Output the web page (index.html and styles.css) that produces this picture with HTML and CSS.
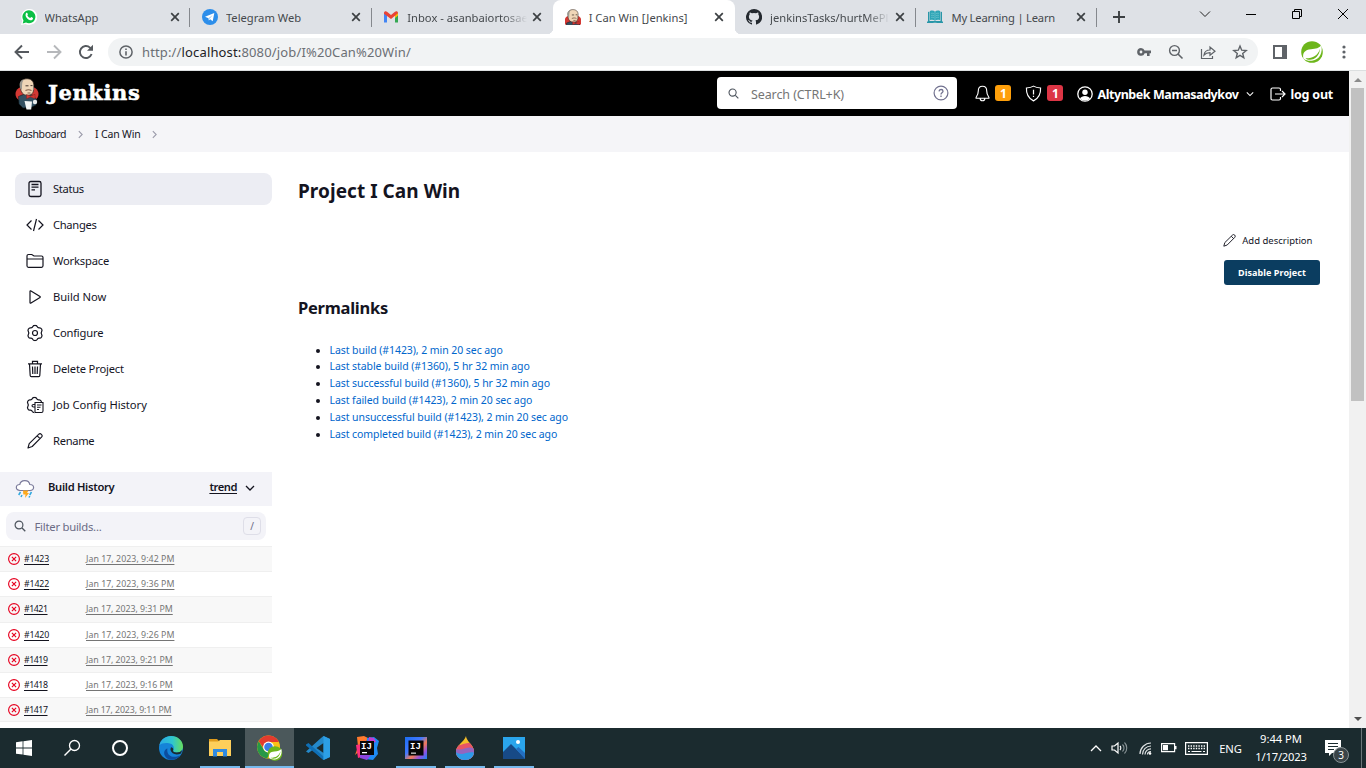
FILE: index.html
```html
<!DOCTYPE html>
<html lang="en">
<head>
<meta charset="utf-8">
<title>I Can Win [Jenkins]</title>
<link rel="stylesheet" href="styles.css">
</head>
<body>
<svg class="defs" aria-hidden="true">
  <symbol id="close" viewBox="0 0 10 10"><path d="M1.2 1.2l7.6 7.6M8.8 1.2L1.2 8.8" fill="none" stroke="#3c4043" stroke-width="1.7"/></symbol>
  <symbol id="chev-r" viewBox="0 0 6 10"><path d="M1 1l4 4-4 4" fill="none" stroke="#9a9aaa" stroke-width="1.3"/></symbol>
  <symbol id="chev-d" viewBox="0 0 10 6"><path d="M1 1l4 4 4-4" fill="none" stroke="currentColor" stroke-width="1.3"/></symbol>
  <symbol id="pencil" viewBox="0 0 16 16"><path d="M1 15l1.2-4.4L11.6 1.4a1.9 1.9 0 0 1 2.9 2.7L5.2 13.5zM10.2 2.8l2.9 2.9" fill="none" stroke="currentColor" stroke-width="1.15" stroke-linejoin="round"/></symbol>
  <symbol id="search" viewBox="0 0 12 12"><circle cx="5" cy="5" r="3.9" fill="none" stroke="#4d545d" stroke-width="1.2"/><path d="M8 8l3.3 3.3" stroke="#4d545d" stroke-width="1.3"/></symbol>
  <symbol id="fail" viewBox="0 0 12 12"><g fill="none" stroke="#e6001f" stroke-width="1.15"><circle cx="6" cy="6" r="5.4"/><path d="M3.9 3.9l4.2 4.2M8.1 3.9L3.9 8.1"/></g></symbol>
  <symbol id="spring" viewBox="0 0 22 22"><circle cx="11" cy="11" r="10.8" fill="#6db61b"/><path d="M20.300 4.500c1.600 6-1 14.500-9.300 15.200-3.500.3-6-.3-8.500-2 -1.500-6 1.500-9 7.500-9.500 5-.4 8-1.200 10.300-3.700z" fill="#fff"/><path d="M4.500 17.300c7 .2 12.500-2.500 14.500-9.500-.3 6.500-5 11-10 11-2 0-3.500-.5-4.500-1.500z" fill="#6db61b"/><path d="M3.500 16.500c1-3 4-4.500 8-5 3-.4 5-1.300 6.500-3-1.300 4-4 5.500-7.500 6-3 .4-5 .8-7 2z" fill="#fff"/></symbol>
  <symbol id="butler" viewBox="0 0 24 32">
    <ellipse cx="12" cy="16" rx="11.500" ry="8.500" fill="#d33833"/>
    <path d="M3.500 18.500l6-2.500 8 1 4.500 5-1 5-5 2.500-8 .5-4-4z" fill="#335061" stroke="#111c22" stroke-width=".6"/>
    <path d="M5.500 9C4 3 8.500.5 12.500.800c5 .3 7 4 6 9 .6 5-1.800 7.500-6 7.500C8 17.300 5.500 14 5.500 9z" fill="#f0d6b7" stroke="#302520" stroke-width=".7"/>
    <path d="M5.500 11C3.400 5 5.500 2 9 1.200 6.500 4.300 7.300 7.700 6.900 11.500z" fill="#99978f"/>
    <path d="M18.200 6l.6 5-1 2z" fill="#99978f"/>
    <path d="M10.500 7.800h3M15.500 7.600h2" stroke="#302520" stroke-width=".9"/><path d="M10.500 12.500c2-1 4-1 6 0M12.500 15h3" stroke="#81604b" stroke-width="1.100" fill="none"/>
    <path d="M11.500 16.500l4 1.500 4.500-1.700v4.500L15.500 19l-4 1.800z" fill="#d33833" stroke="#7a1917" stroke-width=".4"/>
    <path d="M9.500 23l7.500.5-.8 8h-4.700z" fill="#f3f5f5"/><circle cx="20" cy="24" r="2.200" fill="#e8ebec"/>
  </symbol>
  <symbol id="gear" viewBox="0 0 16 16"><path d="M6 1.800C6.600.4 9.400.4 10 1.800c.4 1 1.300 1.500 2.300 1.300 1.500-.2 2.900 2.100 2 3.400-.6.900-.6 2.100 0 3 .9 1.300-.5 3.600-2 3.400-1-.2-1.900.3-2.300 1.300-.6 1.400-3.400 1.400-4 0-.4-1-1.300-1.500-2.300-1.300-1.500.2-2.900-2.100-2-3.400.6-.9.600-2.100 0-3-.9-1.300.5-3.600 2-3.400 1 .2 1.900-.3 2.300-1.300z" fill="none" stroke="currentColor" stroke-width="1.150"/></symbol>
</svg>

<header class="tabstrip">
  <div class="tab"><svg class="fav" viewBox="0 0 16 16"><path d="M0 16l1.200-4.300A8 8 0 1 1 4.500 15z" fill="#fff"/><path d="M1.700 14.400l.8-3A6.500 6.500 0 1 1 5 13.600z" fill="#0bbf45"/><path d="M5.100 4c.7-.7 1.400-.1 1.700 1.200.2.600-.5.800-.4 1.200.6 1.300 1.400 2 2.700 2.500.5.100.8-1 1.300-.8l1.600.8c.300 2-2 2.700-3.500 2.100C5.500 9.700 3.600 6.400 5.100 4z" fill="#fff"/></svg><span class="tt">WhatsApp</span><svg class="x"><use href="#close"/></svg></div>
  <div class="tab"><svg class="fav" viewBox="0 0 16 16"><circle cx="8" cy="8" r="8" fill="#2d8eea"/><path d="M3 7.800l9.300-3.700-1.600 8.100-2.600-1.900-1.300 1.300-.3-2.300z" fill="#fff"/><path d="M6.500 9.200L10.700 6 7.600 9.700z" fill="#8fc3f4"/></svg><span class="tt">Telegram Web</span><svg class="x"><use href="#close"/></svg></div>
  <div class="tab nosep"><svg class="fav" viewBox="0 0 16 16"><path d="M1 3.500v10h3V6z" fill="#4285f4"/><path d="M15 3.500v10h-3V6z" fill="#34a853"/><path d="M12 6v3l3-2.500V4z" fill="#fbbc04"/><path d="M1 4c0-2 2-2.300 3-1.300L8 6l4-3.300C13 1.700 15 2 15 4l-3 2.700L8 10 1 4.700z" fill="#ea4335"/></svg><span class="tt fade">Inbox - asanbaiortosae</span><svg class="x"><use href="#close"/></svg></div>
  <div class="tab active"><svg class="fav" viewBox="2 0 20 21"><use href="#butler" width="24" height="32"/></svg><span class="tt">I Can Win [Jenkins]</span><svg class="x"><use href="#close"/></svg></div>
  <div class="tab"><svg class="fav" viewBox="0 0 16 16"><path d="M8 0a8 8 0 0 0-2.500 15.600c.4.100.5-.2.500-.4v-1.500c-2.200.5-2.700-.9-2.700-.9-.4-.9-.9-1.200-.9-1.200-.7-.5.100-.5.100-.5.800.1 1.200.8 1.200.8.700 1.200 1.900.9 2.300.700.1-.5.300-.9.500-1.100-1.800-.2-3.600-.9-3.600-3.900 0-.9.300-1.600.8-2.100-.1-.2-.4-1 .1-2.100 0 0 .7-.2 2.200.8a7.500 7.500 0 0 1 4 0c1.500-1 2.200-.8 2.200-.8.400 1.100.2 1.900.1 2.100.5.600.8 1.300.8 2.100 0 3.100-1.900 3.700-3.700 3.900.3.300.6.700.6 1.500v2.200c0 .2.100.5.600.4A8 8 0 0 0 8 0z" fill="#24292f"/></svg><span class="tt fade">jenkinsTasks/hurtMePl</span><svg class="x"><use href="#close"/></svg></div>
  <div class="tab"><svg class="fav" viewBox="0 0 16 16"><path d="M1 3l1.500-.4V12h11V2.600L15 3v10H1z" fill="#2996a8"/><path d="M3 2c2-.8 3.800-.5 5 .7 1.200-1.200 3-1.500 5-.7v9c-2-.6-3.700-.5-5 .8-1.300-1.300-3-1.400-5-.8z" fill="#2fa5b6"/><path d="M8 3v8M4 4.500c1-.4 2-.3 3 .3M4 6.500c1-.4 2-.3 3 .3M4 8.500c1-.4 2-.3 3 .3M12 4.500c-1-.4-2-.3-3 .3M12 6.500c-1-.4-2-.3-3 .3M12 8.500c-1-.4-2-.3-3 .3" stroke="#8fd3db" stroke-width=".5" fill="none"/><path d="M0 12.500h6l.6.700h2.800l.6-.7h6V14H0z" fill="#2996a8"/></svg><span class="tt learn">My Learning | Learn</span><svg class="x"><use href="#close"/></svg></div>
  <svg class="newtab" viewBox="0 0 12 12"><path d="M6 0v12M0 6h12" stroke="#3c4043" stroke-width="1.900"/></svg>
  <div class="winbtns">
    <svg width="12" height="12" viewBox="0 0 12 12"><path d="M1 3.500l5 5 5-5" fill="none" stroke="#222"/></svg>
    <svg width="12" height="12" viewBox="0 0 12 12"><path d="M1 6.500h10" stroke="#000"/></svg>
    <svg width="12" height="12" viewBox="0 0 12 12"><path d="M1.500 3.500h7v7h-7zM3.500 3V1.500h7v7H9" fill="none" stroke="#000"/></svg>
    <svg width="12" height="12" viewBox="0 0 12 12"><path d="M1 1l10 10M11 1L1 11" stroke="#000"/></svg>
  </div>
</header>

<div class="toolbar">
  <svg class="nav" viewBox="0 0 16 16"><path d="M15 8H2M8 1.500L1.500 8 8 14.500" fill="none" stroke="#55595e" stroke-width="1.900"/></svg>
  <svg class="nav" viewBox="0 0 16 16"><path d="M1 8h13M8 1.500L14.500 8 8 14.500" fill="none" stroke="#b6b8bb" stroke-width="1.900"/></svg>
  <svg class="nav" viewBox="0 0 16 16"><path d="M13.600 10A6 6 0 1 1 12 3.600L14 5.500" fill="none" stroke="#55595e" stroke-width="1.900"/><path d="M15 .8v6H9z" fill="#55595e"/></svg>
  <div class="omni">
    <svg class="info" viewBox="0 0 14 14"><circle cx="7" cy="7" r="6.100" fill="none" stroke="#5f6368" stroke-width="1.500"/><path d="M7 6.200v4.300M7 3.400V5" stroke="#5f6368" stroke-width="1.600"/></svg>
    <span class="url">http://<b>localhost:</b>8080/job/I%20Can%20Win/</span>
    <div class="omni-icons">
      <svg width="16" height="16" viewBox="0 0 16 16"><path d="M5 4a3.900 3.900 0 1 0 3.700 5.300H11V12h2.600V9.300H15V6.500H8.600A3.900 3.900 0 0 0 5 4zm0 2.600a1.400 1.400 0 1 1 0 2.800 1.400 1.400 0 0 1 0-2.800z" fill="#5f6368"/></svg>
      <svg width="16" height="16" viewBox="0 0 16 16"><circle cx="6.500" cy="6.500" r="4.900" fill="none" stroke="#5f6368" stroke-width="1.400"/><path d="M4 6.500h5M10 10l4.500 4.500" stroke="#5f6368" stroke-width="1.600"/></svg>
      <svg width="16" height="16" viewBox="0 0 16 16"><path d="M1.500 5v9.500h11V12M4 11c.5-3.500 2.500-5 6-5V3l5 4.300-5 4V8.600C7.300 8.600 5.500 9.300 4 11z" fill="none" stroke="#5f6368" stroke-width="1.200"/></svg>
      <svg width="16" height="16" viewBox="0 0 16 16"><path d="M8 2l1.700 4.200 4.500.3-3.500 2.900 1.100 4.400L8 11.400l-3.800 2.400 1.100-4.400-3.500-2.900 4.500-.3z" fill="none" stroke="#5f6368" stroke-width="1.400"/></svg>
    </div>
  </div>
  <svg class="panel" viewBox="0 0 14 14"><path d="M1 1h12v12H1z" fill="#fff" stroke="#5f6368" stroke-width="2"/><path d="M9 1h4v12H9z" fill="#5f6368"/></svg>
  <svg class="avatar"><use href="#spring"/></svg>
  <svg class="dots" viewBox="0 0 4 14"><g fill="#5f6368"><circle cx="2" cy="2" r="1.600"/><circle cx="2" cy="7" r="1.600"/><circle cx="2" cy="12" r="1.600"/></g></svg>
</div>

<div class="view">
  <div class="page">
    <header class="jhead">
      <svg class="logo"><use href="#butler"/></svg>
      <span class="brand">Jenkins</span>
      <div class="jsearch"><svg class="mag"><use href="#search"/></svg><span class="ph">Search (CTRL+K)</span><svg class="q" viewBox="0 0 16 16"><circle cx="8" cy="8" r="6.900" fill="none" stroke="#71718f" stroke-width="1.200"/><path d="M6 6.400c.2-2.600 4-2.400 4-.2C10 7.800 8 7.700 8 9.400M8 10.600v1.300" fill="none" stroke="#71718f" stroke-width="1.300"/></svg></div>
      <svg class="bell" viewBox="0 0 16 18"><path d="M8 1.200c3.200 0 4.500 2.300 4.500 5 0 3.800 1 5 2.300 6.800v1H1.200v-1C2.500 11.200 3.500 10 3.500 6.200c0-2.700 1.300-5 4.500-5zM5.500 14.500c.3 3 4.700 3 5 0" fill="none" stroke="#fff" stroke-width="1.200"/></svg>
      <span class="badge">1</span>
      <svg class="shield" viewBox="0 0 18 18"><path d="M9 1.200c2 1.200 4.500 1.800 7.500 2 .3 6.500-1.700 10.800-7.500 13.600C3.200 14 1.200 9.700 1.500 3.200c3-.2 5.500-.8 7.500-2z" fill="none" stroke="#fff" stroke-width="1.200"/><path d="M9 5v5M9 11.300v1.500" stroke="#fff" stroke-width="1.300"/></svg>
      <span class="badge red">1</span>
      <svg class="user" viewBox="0 0 16 16"><circle cx="8" cy="8" r="7.200" fill="none" stroke="#fff" stroke-width="1.300"/><circle cx="8" cy="6.200" r="2.700" fill="#fff"/><path d="M3 12.500c1.500-3.400 8.500-3.400 10 0C11 15 5 15 3 12.500z" fill="#fff"/></svg>
      <span class="jl name">Altynbek Mamasadykov</span>
      <svg class="dn"><use href="#chev-d"/></svg>
      <svg class="out" viewBox="0 0 16 14"><path d="M10.500 4V2.500c0-1-.5-1.500-1.500-1.500H2.500C1.500 1 1 1.500 1 2.500v9c0 1 .5 1.500 1.500 1.500H9c1 0 1.500-.5 1.500-1.500V10M5 7h10M12 4l3 3-3 3" fill="none" stroke="#fff" stroke-width="1.200"/></svg>
      <span class="jl">log out</span>
    </header>
    <nav class="crumbs"><span>Dashboard</span><svg><use href="#chev-r"/></svg><span class="cur-crumb">I Can Win</span><svg><use href="#chev-r"/></svg></nav>
    <div class="cols">
      <aside class="side">
        <ul class="tasks">
          <li class="on snug"><svg viewBox="0 0 18 18"><g fill="none" stroke="currentColor" stroke-width="1.300"><rect x="3" y="1.500" width="12" height="15" rx="1.800"/><path d="M5.500 4.500h7M5.500 7.200h7M5.500 9.900h3.500"/></g></svg><span>Status</span></li>
          <li class="snug"><svg viewBox="0 0 18 18"><path d="M5.500 4.500L1 9l4.500 4.500M12.500 4.500L17 9l-4.500 4.500M10.500 3l-3 12" fill="none" stroke="currentColor" stroke-width="1.200"/></svg><span>Changes</span></li>
          <li><svg viewBox="0 0 18 18"><path d="M1 4c0-1 .5-1.500 1.500-1.500h3.300L8 4h7.500c1 0 1.500.5 1.500 1.500v8.300c0 1-.5 1.500-1.500 1.500h-13c-1 0-1.500-.5-1.500-1.500zM1 7h16" fill="none" stroke="currentColor" stroke-width="1.200"/></svg><span>Workspace</span></li>
          <li class="loose"><svg viewBox="0 0 18 18"><path d="M4 3.500c0-.6.500-.8 1-.5l9 5.500c.4.300.4.800 0 1L5 15c-.5.300-1 .1-1-.5z" fill="none" stroke="currentColor" stroke-width="1.200"/></svg><span>Build Now</span></li>
          <li><svg viewBox="0 0 18 18"><use href="#gear" x="0.500" y="0.500" width="17" height="17"/><circle cx="9" cy="9" r="2.500" fill="none" stroke="currentColor" stroke-width="1.200"/></svg><span>Configure</span></li>
          <li><svg viewBox="0 0 18 18"><path d="M2 3.800h14M6.500 3.500V1.300h5v2.200M3.500 4l.7 11.500c0 .8.500 1.200 1.200 1.200h7.200c.7 0 1.200-.4 1.200-1.200L14.500 4M6.500 6.500l.3 7.500M9 6.500V14M11.500 6.500l-.3 7.500" fill="none" stroke="currentColor" stroke-width="1.200"/></svg><span>Delete Project</span></li>
          <li class="loose"><svg viewBox="0 0 18 18"><use href="#gear" x="0" y="0.500" width="17" height="17"/><rect x="8" y="6.500" width="9.500" height="10.500" fill="#fff"/><path d="M9 8.500H7.500c-2 0-2 2.500 0 2.500H9M9 6.500v10h6.500c1 0 1.500-.5 1.500-1.500V6.500zM11 9h4.500M11 11.300h3.500M11 13.500h2" fill="none" stroke="currentColor" stroke-width="1.100"/></svg><span>Job Config History</span></li>
          <li class="snug"><svg viewBox="0 0 18 18"><use href="#pencil" x="1" y="1" width="16" height="16"/></svg><span>Rename</span></li>
        </ul>
        <section class="history">
          <div class="hhead"><svg class="storm" viewBox="0 0 20 20"><path d="M5 11.500C0 11.500.3 5.500 4.800 5.500 5.500.500 13.800 0 14.800 5.500c5 0 5 6 .2 6z" fill="#fff" stroke="#7a7a9a" stroke-width="1.200"/><path d="M8 11.500h5.500L12 14h2l-4 5 .5-3.500H8.300z" fill="#ffa91c"/><path d="M5.500 13l-1.800 3M16.500 13l-1.800 3M7 16l-1 2M14.800 17l-.8 1.500" stroke="#2fa8e0" stroke-width="1.500" fill="none"/></svg><span class="ht">Build History</span><a class="tr">trend</a><svg class="hd"><use href="#chev-d"/></svg></div>
          <div class="filter"><svg><use href="#search"/></svg><span>Filter builds...</span><kbd>/</kbd></div>
          <ul class="builds">
            <li><svg><use href="#fail"/></svg><a class="n">#1423</a><a>Jan 17, 2023, 9:42 PM</a></li>
            <li><svg><use href="#fail"/></svg><a class="n">#1422</a><a>Jan 17, 2023, 9:36 PM</a></li>
            <li class="snug"><svg><use href="#fail"/></svg><a class="n">#1421</a><a>Jan 17, 2023, 9:31 PM</a></li>
            <li><svg><use href="#fail"/></svg><a class="n">#1420</a><a>Jan 17, 2023, 9:26 PM</a></li>
            <li class="snug"><svg><use href="#fail"/></svg><a class="n">#1419</a><a>Jan 17, 2023, 9:21 PM</a></li>
            <li class="snug"><svg><use href="#fail"/></svg><a class="n">#1418</a><a>Jan 17, 2023, 9:16 PM</a></li>
            <li class="snug last"><svg><use href="#fail"/></svg><a class="n">#1417</a><a>Jan 17, 2023, 9:11 PM</a></li>
          </ul>
        </section>
      </aside>
      <main class="main">
        <h1>Project I Can Win</h1>
        <div class="actions">
          <a class="desc"><svg><use href="#pencil"/></svg><span>Add description</span></a>
          <button class="disable">Disable Project</button>
        </div>
        <h2>Permalinks</h2>
        <ul class="links">
          <li><a>Last build (#1423), 2 min 20 sec ago</a></li>
          <li><a>Last stable build (#1360), 5 hr 32 min ago</a></li>
          <li><a>Last successful build (#1360), 5 hr 32 min ago</a></li>
          <li><a>Last failed build (#1423), 2 min 20 sec ago</a></li>
          <li><a>Last unsuccessful build (#1423), 2 min 20 sec ago</a></li>
          <li><a>Last completed build (#1423), 2 min 20 sec ago</a></li>
        </ul>
      </main>
    </div>
  </div>
  <div class="scroll"><i class="up"></i><div class="thumb"></div><i class="down"></i></div>
</div>

<footer class="taskbar">
  <div class="tb sm"><svg width="16" height="16" viewBox="0 0 16 16"><path d="M0 2.300L6.600 1.300v6.200H0zM7.400 1.200L16 0v7.500H7.400zM0 8.400h6.600v6.200L0 13.700zM7.400 8.400H16V16l-8.600-1.200z" fill="#fff"/></svg></div>
  <div class="tb sm"><svg width="18" height="18" viewBox="0 0 18 18"><circle cx="11.500" cy="6.500" r="5" fill="none" stroke="#fff" stroke-width="1.300"/><path d="M8 10l-6.500 6.500" stroke="#fff" stroke-width="1.400"/></svg></div>
  <div class="tb sm"><svg width="18" height="18" viewBox="0 0 18 18"><circle cx="9" cy="9" r="7" fill="none" stroke="#fff" stroke-width="2"/></svg></div>
  <div class="tb edge"><svg width="24" height="24" viewBox="0 0 24 24"><defs><linearGradient id="eg" x1="0" y1="0" x2="1" y2="0"><stop offset="0" stop-color="#2aa9e6"/><stop offset=".55" stop-color="#2fc6cf"/><stop offset="1" stop-color="#67de5b"/></linearGradient></defs><circle cx="12" cy="12" r="12" fill="#1583d8"/><path d="M.3 9.500C1.600 3.500 6.500 0 12 0c7 0 12 5 12 10.500 0 4-3 6-6.300 6-3 0-4.200-1.100-3.500-2.300 1.300-2.300.8-6.200-4.200-7C6.500 6.600 2.500 7 .3 9.500z" fill="url(#eg)"/><path d="M8.500 12.500C7 19 13 23 21 19.500 18 23.500 13.500 24.500 10 23.500 3.500 21 4 13.500 8.500 12.500z" fill="#0c4d9e"/><path d="M14.200 14.200c-.7 1.200.5 2.300 3.500 2.300 2 0 4.300-.8 5.500-2.500L22 17.500c-5 2-9.500.5-10.500-3.500 0-1.500.3-2.300.6-2.800 2 .3 2.600 1.800 2.100 3z" fill="#1b2b2f"/></svg></div>
  <div class="tb line"><svg width="22" height="20" viewBox="0 0 22 20"><path d="M0 1h8l2 2v4H0z" fill="#e09c1c"/><path d="M0 3.500h9L11 2h11v16H0z" fill="#fdcf5b"/><path d="M4 11h14v7.500h-4V14H8v4.500H4z" fill="#2f8ae0"/></svg></div>
  <div class="tb cur"><svg width="28" height="26" viewBox="0 0 28 26"><circle cx="13.500" cy="12" r="11.500" fill="#fbc116"/><path d="M3.700 6.200A11.500 11.500 0 0 1 23.900 7H13.500a5 5 0 0 0-4.700 6.500z" fill="#e33b2e"/><path d="M3.700 6.200L9 15a5 5 0 0 0 6 2l-2.800 6.500A11.500 11.500 0 0 1 3.700 6.200z" fill="#279847"/><circle cx="13.500" cy="12" r="5.400" fill="#fff"/><circle cx="13.500" cy="12" r="4.300" fill="#3b7de8"/><use href="#spring" x="12.500" y="11" width="15" height="15"/></svg></div>
  <div class="tb"><svg width="24" height="24" viewBox="0 0 24 24"><path d="M17.500 0L24 3v18l-6.500 3L6.500 14 2.500 17 0 15.500 15 2z" fill="#2489ca"/><path d="M17.500 7L10.500 12l7 5z" fill="#1b2b2f"/><path d="M0 8.500L2.500 7l15 13.500V24L0 9.500z" fill="#0f6fb5"/><path d="M17.500 0L24 3v18l-6.500 3z" fill="#2c9fe6"/></svg></div>
  <div class="tb"><svg width="24" height="24" viewBox="0 0 24 24"><path d="M2 1l7-1 4 2-5 10-8 7 3-8z" fill="#ff7a2e"/><path d="M1 9l6-1 3 12-7 2z" fill="#fc2f7b"/><path d="M12 2l7-1 5 4-2 7 1 6-5 6-8-1z" fill="#1e8bf5"/><path d="M14 1l5 1 2 4-8 2z" fill="#c33bd1"/><path d="M5 19h11l-4 5-7-2z" fill="#8c45e0"/><path d="M5 5h14v14H5z" fill="#080808"/><path d="M7 16h5v1.300H7z" fill="#fff"/><text x="6" y="12.500" class="ij">IJ</text></svg></div>
  <div class="tb line"><svg width="24" height="24" viewBox="0 0 24 24"><defs><linearGradient id="ig" x1="0" y1="0" x2="1" y2="1"><stop offset="0" stop-color="#1b6ef3"/><stop offset=".4" stop-color="#4379ff"/><stop offset=".6" stop-color="#f57b55"/><stop offset=".8" stop-color="#8b51e8"/><stop offset="1" stop-color="#1689ee"/></linearGradient></defs><path d="M1 1h22v22H1z" fill="url(#ig)"/><path d="M4.500 4.500h15v15h-15z" fill="#060606"/><path d="M7 16.500h5v1.300H7z" fill="#ccc"/><text x="6" y="12.500" class="ij">IJ</text></svg></div>
  <div class="tb line"><svg width="20" height="24" viewBox="0 0 20 24"><defs><clipPath id="drop"><path d="M11 0c0 5 8 9 8 15.500C19 21 15 24 10 24s-9-3-9-8.500C1 9 9 6.500 11 0z"/></clipPath></defs><g clip-path="url(#drop)"><path d="M0 0h20v24H0z" fill="#f4be2a"/><path d="M0 9c6 2 12-5 20-1v16H0z" fill="#e85566"/><path d="M0 12c7 5 12-4 20 1v11H0z" fill="#9465c0"/><path d="M0 15c6 7 13-1 20 2v7H0z" fill="#2e9ae8"/></g></svg></div>
  <div class="tb line"><svg width="22" height="22" viewBox="0 0 22 22"><path d="M0 0h22v22H0z" fill="#2aa5ec"/><path d="M0 15L8 7l14 14v1H0z" fill="#174a86"/><path d="M13 12l2.500-2 6.500 6v6z" fill="#236fc1"/><circle cx="15" cy="5" r="2" fill="#fff"/></svg></div>
  <div class="tray">
    <svg width="12" height="8" viewBox="0 0 12 8"><path d="M1 7l5-5 5 5" fill="none" stroke="#fff" stroke-width="1.300"/></svg>
    <svg class="spk" width="17" height="14" viewBox="0 0 17 14"><path d="M1 5h2.500L7 2v10L3.500 9H1z" fill="none" stroke="#fff" stroke-width="1.200"/><path d="M9 5c1 1 1 3 0 4" fill="none" stroke="#fff" stroke-width="1.200"/><path d="M11.500 3.500c2 2 2 5 0 7M13.500 1.500c3 3 3 8 0 11" fill="none" stroke="#8a9598" stroke-width="1.100"/></svg>
    <svg class="wifi" width="13" height="13" viewBox="0 0 13 13"><g fill="none" stroke="#dfe3e4" stroke-width="1.200"><path d="M1 12C1 6 6 1 12 1M3.500 12.500c0-5 4-8.500 8.500-8.500M6 12.500C6 9 9 6.800 12 6.800M8.500 12.500C8.500 11 10 9.600 12 9.600"/></g><circle cx="11" cy="11.500" r="1.300" fill="#fff"/></svg>
    <svg class="bat" width="16" height="10" viewBox="0 0 16 10"><path d="M.6.600h13v8h-13z" fill="none" stroke="#fff" stroke-width="1.200"/><path d="M2 2h5v5.200H2zM14 3h1.500v3.200H14z" fill="#fff"/></svg>
    <svg class="kb" width="23" height="13" viewBox="0 0 23 13"><path d="M.6.600h21.800v11.800H.6z" fill="none" stroke="#fff" stroke-width="1.200"/><path d="M3 4h17M3 6.500h17" stroke="#fff" stroke-width="1.300" stroke-dasharray="1.400 1.200"/><path d="M3 9.500h2M6.500 9.500h10M18 9.500h2" stroke="#fff" stroke-width="1.200"/></svg>
    <span class="eng">ENG</span>
    <div class="clock"><span>9:44 PM</span><span class="date">1/17/2023</span></div>
    <div class="note"><svg width="16" height="16" viewBox="0 0 16 16"><path d="M0 0h16v13H7l-3 3v-3H0z" fill="#fff"/><path d="M3 3.500h10M3 6.500h10M3 9.500h6" stroke="#1b2b2f" stroke-width="1.200"/></svg><span>3</span></div>
    <i class="peek"></i>
  </div>
</footer>
</body>
</html>
```
FILE: styles.css
```css
* { box-sizing: border-box; }
body { margin: 0; width: 1366px; height: 768px; overflow: hidden; display: flex; flex-direction: column; background: #fff; color: #14141f; font-family: "Noto Sans", "Open Sans", sans-serif; white-space: nowrap; }
ul { list-style: none; margin: 0; padding: 0; }
svg { flex: none; display: block; }
.defs { position: absolute; width: 0; height: 0; }

/* Browser chrome */
.tabstrip { flex: none; height: 34px; background: #dee1e6; display: flex; align-items: center; padding-left: 9px; }
.tab { width: 181.400px; height: 34px; display: flex; align-items: center; padding-left: 11.500px; position: relative; font-size: 11.200px; color: #45494d; }
.tab::after { content: ""; position: absolute; right: 0; top: 8px; width: 1px; height: 19px; background: #85888d; }
.nosep::after { display: none; }
.active { background: #fff; border-radius: 8px 8px 0 0; }
.active::before, .active::after { content: ""; position: absolute; top: auto; bottom: 0; width: 6px; height: 6px; }
.active::before { left: -6px; background: radial-gradient(circle at 0 0, #dee1e6 6px, #fff 6.500px); }
.active::after { right: -6px; background: radial-gradient(circle at 100% 0, #dee1e6 6px, #fff 6.500px); }
.fav { width: 16px; height: 16px; margin-right: 8px; }
.tt { flex: none; width: 120px; overflow: hidden; }
.learn { letter-spacing: -.200px; }
.fade { -webkit-mask-image: linear-gradient(90deg, #000 80%, transparent 100%); mask-image: linear-gradient(90deg, #000 80%, transparent 100%); }
.x { width: 10px; height: 10px; margin-left: 5px; }
.newtab { width: 12px; height: 12px; margin-left: 15.500px; }
.winbtns { margin-left: auto; display: flex; gap: 34px; padding-right: 17px; margin-top: -6px; }
.toolbar { flex: none; height: 37px; border-bottom: 1px solid #dcdfe0; display: flex; align-items: center; padding-left: 14px; }
.nav { width: 16px; height: 16px; margin-right: 16px; }
.omni { width: 1150px; height: 28px; border-radius: 14px; background: #f1f3f4; display: flex; align-items: center; padding: 0 10px 0 11px; margin-left: -2px; }
.info { width: 14px; height: 14px; margin-right: 9px; }
.url { font-size: 13px; letter-spacing: .144px; color: #6b6f74; }
.url b { font-weight: 400; color: #202124; }
.omni-icons { margin-left: auto; display: flex; gap: 16px; }
.panel { width: 14px; height: 14px; margin-left: 15px; }
.avatar { width: 22px; height: 22px; margin-left: 14px; }
.dots { width: 4px; height: 14px; margin-left: 19px; }

/* Jenkins page */
.view { flex: none; height: 657px; display: flex; }
.page { width: 1349px; overflow: hidden; }
.jhead { height: 45px; background: #000; color: #fff; display: flex; align-items: center; padding: 0 16px 0 15px; }
.logo { width: 24px; height: 32px; }
.brand { font: bold 21px/1 "DejaVu Serif", serif; letter-spacing: .600px; -webkit-text-stroke: .500px #fff; margin: 0 0 2px 9px; }
.jsearch { width: 240px; height: 32px; margin-left: auto; margin-right: 18px; margin-top: -1px; border-radius: 4px; background: #fff; display: flex; align-items: center; padding: 0 8px 0 11px; }
.mag { width: 11px; height: 11px; margin-right: 11.500px; }
.ph { font-size: 12.500px; letter-spacing: -.090px; color: #757575; padding-top: 2px; }
.q { width: 16px; height: 16px; margin-left: auto; }
.bell { width: 15px; height: 17px; }
.badge { width: 16px; height: 16px; margin: 0 0 1px 5px; background: #fe9f0a; border-radius: 3px; font: bold 12px/17px "Noto Sans", sans-serif; text-align: center; }
.badge.red { background: #dc3545; }
.shield { width: 17px; height: 17px; margin-left: 14px; }
.user { width: 16px; height: 16px; margin-left: 14px; }
.jl { font-size: 12.500px; font-weight: 700; margin-left: 4px; padding-top: 2px; letter-spacing: -.220px; }
.name { letter-spacing: -.430px; }
.dn { width: 8px; height: 6px; margin: 0 16px 0 8px; }
.out { width: 16px; height: 14px; }
.crumbs { height: 36px; background: #f5f5f8; display: flex; align-items: center; padding-left: 15px; font-size: 10.500px; letter-spacing: -.370px; }
.crumbs .cur-crumb { letter-spacing: -.170px; }
.crumbs svg { width: 5px; height: 9px; margin: 0 12px; }
.crumbs svg:last-child { margin-left: 11px; }
.cols { display: flex; }
.side { width: 272px; padding-top: 21px; }
.tasks { padding-left: 15px; display: grid; gap: 4px; }
.tasks li { height: 32px; border-radius: 8px; display: flex; align-items: center; padding-left: 11px; font-size: 11.200px; letter-spacing: -.190px; }
.tasks .snug { letter-spacing: -.320px; }
.tasks .loose { letter-spacing: -.040px; }
.tasks span { padding-bottom: 2px; }
.tasks .on { background: #ecedf3; }
.tasks svg { width: 18px; height: 18px; margin-right: 9px; }
.hhead { height: 34px; margin-top: 15px; background: #f3f3f8; display: flex; align-items: center; padding: 0 17px 0 15px; font-size: 11.200px; letter-spacing: -.300px; }
.storm { width: 20px; height: 20px; margin: 0 13px 1px 0; }
.ht, .tr { font-weight: 600; padding-bottom: 5px; }
.tr { margin-left: auto; letter-spacing: -.450px; text-decoration: underline; text-underline-offset: 2px; }
.hd { width: 10px; height: 6px; margin: 0 0 2px 8px; }
.filter { width: 260px; height: 28px; margin: 6px 0 6px 6px; border-radius: 8px; background: #f3f3f8; display: flex; align-items: center; padding: 0 5px 0 8px; color: #6b6b85; font-size: 11.300px; letter-spacing: -.250px; }
.filter svg { width: 12px; height: 12px; margin-right: 8.500px; }
kbd { margin-left: auto; width: 18px; height: 18px; border: 1px solid #dedee8; border-radius: 4px; font: 10px/16px "Noto Sans", sans-serif; text-align: center; }
.builds li { height: 25.200px; border-top: 1px solid #efefef; background: #f8f8f8; display: flex; align-items: center; padding-left: 8px; font-size: 8.800px; letter-spacing: .040px; color: #757575; }
.builds li:nth-child(even) { background: #fff; }
.builds .snug { letter-spacing: -.040px; }
.builds .last { letter-spacing: -.100px; border-bottom: 1px solid #efefef; }
.builds svg { width: 12px; height: 12px; margin-right: 4px; }
.builds a { text-decoration: underline; text-underline-offset: 2px; }
.builds .n { width: 62px; color: #14141f; letter-spacing: -.160px; }
.builds .snug .n { letter-spacing: -.460px; }
.main { flex: 1; padding: 26px 29px 0 26px; display: flex; flex-direction: column; }
h1 { margin: 0; font-size: 19px; line-height: 26px; letter-spacing: .050px; }
.actions { display: flex; flex-direction: column; align-items: flex-end; margin-top: 26px; }
.desc { display: flex; align-items: center; height: 20px; font-size: 9.500px; margin-right: 7.500px; }
.desc svg { width: 13px; height: 13px; margin-right: 6px; }
.disable { width: 96px; height: 25px; margin-top: 10px; border: 0; border-radius: 3px; background: #0b3d60; color: #fff; font: bold 9px "Noto Sans", sans-serif; letter-spacing: .070px; padding: 0; }
h2 { margin: 11px 0 21.700px; font-size: 16.500px; line-height: 24px; letter-spacing: -.250px; }
.links { padding-left: 31.500px; font-size: 10.500px; letter-spacing: -.070px; list-style: disc; }
.links li { line-height: 16.800px; }
.links a { color: #0066cc; }
.scroll { width: 17px; background: #f1f1f1; display: flex; flex-direction: column; align-items: center; }
.up, .down { border: 4px solid transparent; width: 0; height: 0; }
.up { border-bottom-color: #8c8c8c; border-top: 0; margin: 7px 0 6px; }
.down { border-top-color: #505050; border-bottom: 0; margin: auto 0 7px; }
.thumb { width: 13px; height: 313px; background: #c1c1c1; }

/* Desktop taskbar */
.taskbar { flex: none; height: 40px; background: #1b2b2f; display: flex; color: #fff; }
.tb { width: 49px; height: 40px; display: flex; align-items: center; justify-content: center; }
.tb.sm { width: 48px; }
.edge { margin-left: 2.500px; }
.line { background: linear-gradient(#76b9ed, #76b9ed) center bottom / 40px 2px no-repeat; }
.cur { background: linear-gradient(#76b9ed, #76b9ed) center bottom / 100% 2px no-repeat #4b585b; }
.ij { font: bold 9px "Liberation Mono", monospace; fill: #fff; }
.tray { margin-left: auto; display: flex; align-items: center; font-size: 11.200px; }
.spk { margin-left: 9px; }
.wifi { margin-left: 11px; }
.bat { margin-left: 9px; }
.kb { margin-left: 8px; }
.eng { margin-left: 11px; }
.clock { width: 78px; display: flex; flex-direction: column; align-items: center; line-height: 18px; }
.date { letter-spacing: -.180px; }
.note { position: relative; margin-left: 5px; }
.note span { position: absolute; left: 8px; top: 7px; width: 16px; height: 16px; border: 1px solid #889295; border-radius: 50%; background: #3a4448; font-size: 10px; line-height: 14px; text-align: center; }
.peek { width: 1px; height: 40px; background: #6a7679; margin: 0 4px 0 20px; }
```
